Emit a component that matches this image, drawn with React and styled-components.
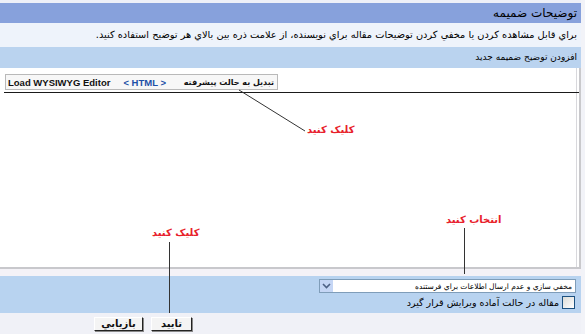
import React from 'react'
import styled, { createGlobalStyle } from 'styled-components';

const GlobalStyle = createGlobalStyle`
  html, body {
    margin: 0;
    padding: 0;
    background: #f2f3f8;
  }
  body {
    font-family: "DejaVu Sans", "Liberation Sans", sans-serif;
    font-size: 11px;
    color: #000;
  }
`;

const App = () => {
  return (
    <Page dir="rtl">
      <GlobalStyle />
      <TopStrip />
      <Header>توضيحات ضميمه</Header>
      <InfoRow>براي قابل مشاهده كردن يا مخفي كردن توضيحات مقاله براي نويسنده، از علامت ذره بين بالاي هر توضيح استفاده كنيد.</InfoRow>
      <SubHeader>افزودن توضيح ضميمه جديد</SubHeader>
      <Editor>
        <ToolbarRow dir="ltr">
          <Toolbar>
            <ToolText dir="ltr">Load WYSIWYG Editor</ToolText>
            <ToolLink dir="ltr">&lt; HTML &gt;</ToolLink>
            <ToolText dir="rtl" arabic>تبديل به حالت پيشرفته</ToolText>
          </Toolbar>
        </ToolbarRow>
        <EditArea />
      </Editor>
      <EditorFoot />
      <Options>
        <Select>
          <SelectText>مخفي سازي و عدم ارسال اطلاعات براي فرستنده</SelectText>
          <SelectArrow>
            <svg width="9" height="6" viewBox="0 0 9 6">
              <path d="M1 1 L4.5 4.5 L8 1" fill="none" stroke="#4d6185" strokeWidth="1.6" />
            </svg>
          </SelectArrow>
        </Select>
        <CheckRow>
          <CheckBox />
          <CheckText>مقاله در حالت آماده ويرايش قرار گيرد</CheckText>
        </CheckRow>
      </Options>
      <Actions dir="ltr">
        <Button>بازيابي</Button>
        <Button wide>تاييد</Button>
      </Actions>

      <Marks width="585" height="334">
        <line x1="239" y1="90" x2="305" y2="131" stroke="#333" strokeWidth="1" />
        <line x1="464.5" y1="228" x2="464.5" y2="274" stroke="#333" strokeWidth="1" />
        <line x1="169.5" y1="242" x2="169.5" y2="313" stroke="#333" strokeWidth="1" />
      </Marks>
      <Label top={124} left={307}>كليک كنيد</Label>
      <Label top={214} left={446}>انتخاب كنيد</Label>
      <Label top={227} left={152}>كليک كنيد</Label>
    </Page>
  );
};

export default App;

const Page = styled.div`
  position: relative;
  width: 581px;
  height: 334px;
  overflow: hidden;
  background: #f0f1f7;
`;

const TopStrip = styled.div`
  height: 3px;
  background: #eef0f8;
`;

const Header = styled.div`
  height: 20px;
  line-height: 20px;
  padding-right: 4px;
  background: #87a1dc;
  font-size: 12px;
`;

const InfoRow = styled.div`
  height: 24px;
  line-height: 24px;
  padding-right: 4px;
  background: #eef3fb;
  white-space: nowrap;
  font-size: 9.8px;
`;

const SubHeader = styled.div`
  height: 21px;
  line-height: 21px;
  padding-right: 4px;
  background: #bad3ef;
  font-size: 9px;
`;

const Editor = styled.div`
  height: 199px;
  background: #fff;
  display: flex;
  flex-direction: column;
  border-left: 4px solid #fff;
  border-right: 2px solid #c9c9cc;
  box-shadow: inset -2px 0 0 #fff, inset -3px 0 0 #d8d8dc;
`;

const ToolbarRow = styled.div`
  height: 25px;
  padding-top: 6px;
  box-sizing: border-box;
  border-bottom: 1px solid #1a1a1a;
  display: flex;
`;

const Toolbar = styled.div`
  margin-left: 1px;
  height: 16px;
  width: 273px;
  box-sizing: border-box;
  border: 1px solid #b9b9b9;
  background: #f7f7f7;
  display: flex;
  align-items: center;
  gap: 13px;
  padding: 0 3px 0 2px;
  white-space: nowrap;
  overflow: hidden;
  font-family: "Liberation Sans", Arial, sans-serif;
  font-weight: bold;
`;

const ToolText = styled.span`
  unicode-bidi: isolate;
  color: #111;
  flex-shrink: 0;
  font-family: ${p => (p.arabic ? '"DejaVu Sans", sans-serif' : '"Liberation Sans", Arial, sans-serif')};
  font-size: ${p => (p.arabic ? '8px' : '9.5px')};
  margin-left: ${p => (p.arabic ? 'auto' : '0')};
`;

const ToolLink = styled.span`
  unicode-bidi: isolate;
  color: #1d4fa6;
  flex-shrink: 0;
  font-size: 9.5px;
`;

const EditArea = styled.div`
  flex: 1;
`;

const EditorFoot = styled.div`
  height: 7px;
  border-top: 2px solid #c8c8cc;
  background: #f4f2f7;
`;

const Options = styled.div`
  height: 37px;
  box-sizing: border-box;
  background: #b8d3f0;
  padding: 3px 5px 0 0;
  display: flex;
  flex-direction: column;
  align-items: flex-start;
  gap: 3px;
`;

const Select = styled.div`
  width: 257px;
  height: 14px;
  box-sizing: border-box;
  border: 1px solid #7f9db9;
  background: #fff;
  display: flex;
  align-items: center;
  justify-content: space-between;
  padding-right: 3px;
  overflow: hidden;
`;

const SelectText = styled.span`
  white-space: nowrap;
  font-size: 7.5px;
`;

const SelectArrow = styled.span`
  width: 13px;
  height: 12px;
  flex-shrink: 0;
  background: #c5d6f5;
  display: flex;
  align-items: center;
  justify-content: center;
`;

const CheckRow = styled.div`
  display: flex;
  align-items: center;
  gap: 3px;
  margin-right: 1px;
`;

const CheckText = styled.span`
  font-size: 9.5px;
`;

const CheckBox = styled.span`
  width: 11px;
  height: 11px;
  border: 1px solid #1c5180;
  background: linear-gradient(135deg, #dcdcd7, #fff);
`;

const Actions = styled.div`
  display: flex;
  padding: 4px 0 0 94px;
  gap: 8px;
`;

const Button = styled.button`
  width: ${p => (p.wide ? '41px' : '49px')};
  height: 14px;
  padding: 0;
  box-sizing: border-box;
  background: #f4f4f4;
  border: 1px solid;
  border-color: #fff #222 #222 #fff;
  box-shadow: 1px 1px 0 #888;
  font-family: "DejaVu Sans", sans-serif;
  font-size: 10px;
  font-weight: bold;
  line-height: 12px;
  color: #111;
`;

const Marks = styled.svg`
  position: absolute;
  left: 0;
  top: 0;
  pointer-events: none;
`;

const Label = styled.span`
  position: absolute;
  top: ${p => p.top}px;
  left: ${p => p.left}px;
  color: #e8202a;
  font-weight: bold;
  font-size: 10px;
  white-space: nowrap;
`;
